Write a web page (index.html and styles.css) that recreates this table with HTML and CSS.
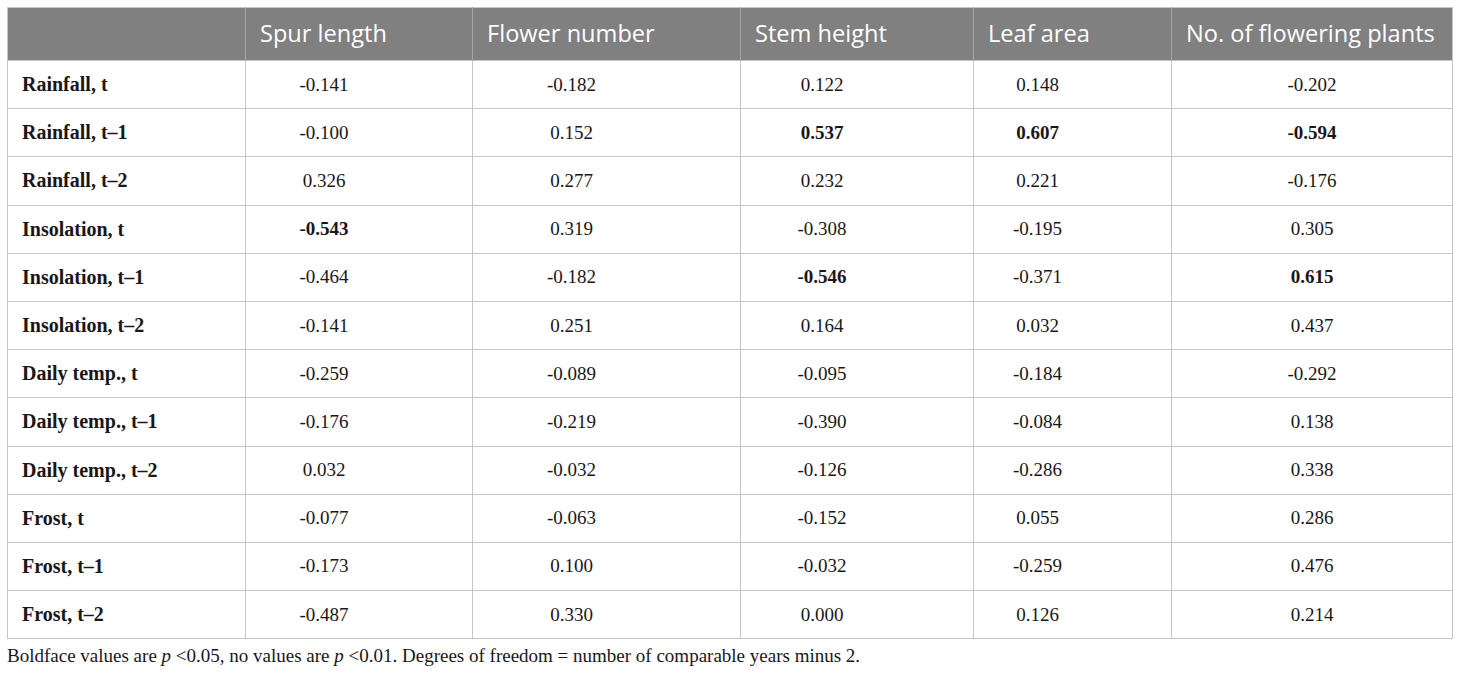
FILE: index.html
```html
<!DOCTYPE html>
<html lang="en">
  <head>
    <meta charset="UTF-8" />
    <meta name="viewport" content="width=device-width, initial-scale=1.0" />
    <title>Climate correlations</title>
    <link rel="stylesheet" href="styles.css">
  </head>
  <body>
    <div class="table-wrap">
      <table class="corr">
        <colgroup>
          <col class="c-label" />
          <col class="c-spur" />
          <col class="c-flower" />
          <col class="c-stem" />
          <col class="c-leaf" />
          <col class="c-plants" />
        </colgroup>
        <thead>
          <tr>
            <th></th>
            <th>Spur length</th>
            <th>Flower number</th>
            <th>Stem height</th>
            <th>Leaf area</th>
            <th>No. of flowering plants</th>
          </tr>
        </thead>
        <tbody>
          <tr>
            <td>Rainfall, t</td>
            <td>-0.141</td><td>-0.182</td><td>0.122</td><td>0.148</td><td>-0.202</td>
          </tr>
          <tr>
            <td>Rainfall, t–1</td>
            <td>-0.100</td><td>0.152</td><td class="sig">0.537</td><td class="sig">0.607</td><td class="sig">-0.594</td>
          </tr>
          <tr>
            <td>Rainfall, t–2</td>
            <td>0.326</td><td>0.277</td><td>0.232</td><td>0.221</td><td>-0.176</td>
          </tr>
          <tr>
            <td>Insolation, t</td>
            <td class="sig">-0.543</td><td>0.319</td><td>-0.308</td><td>-0.195</td><td>0.305</td>
          </tr>
          <tr>
            <td>Insolation, t–1</td>
            <td>-0.464</td><td>-0.182</td><td class="sig">-0.546</td><td>-0.371</td><td class="sig">0.615</td>
          </tr>
          <tr>
            <td>Insolation, t–2</td>
            <td>-0.141</td><td>0.251</td><td>0.164</td><td>0.032</td><td>0.437</td>
          </tr>
          <tr>
            <td>Daily temp., t</td>
            <td>-0.259</td><td>-0.089</td><td>-0.095</td><td>-0.184</td><td>-0.292</td>
          </tr>
          <tr>
            <td>Daily temp., t–1</td>
            <td>-0.176</td><td>-0.219</td><td>-0.390</td><td>-0.084</td><td>0.138</td>
          </tr>
          <tr>
            <td>Daily temp., t–2</td>
            <td>0.032</td><td>-0.032</td><td>-0.126</td><td>-0.286</td><td>0.338</td>
          </tr>
          <tr>
            <td>Frost, t</td>
            <td>-0.077</td><td>-0.063</td><td>-0.152</td><td>0.055</td><td>0.286</td>
          </tr>
          <tr>
            <td>Frost, t–1</td>
            <td>-0.173</td><td>0.100</td><td>-0.032</td><td>-0.259</td><td>0.476</td>
          </tr>
          <tr>
            <td>Frost, t–2</td>
            <td>-0.487</td><td>0.330</td><td>0.000</td><td>0.126</td><td>0.214</td>
          </tr>
        </tbody>
      </table>
      <p class="note">
        Boldface values are <i>p</i> &lt;0.05, no values are <i>p</i> &lt;0.01. Degrees of freedom = number of comparable years minus 2.
      </p>
    </div>
  </body>
</html>
```

FILE: styles.css
```css
* {
  box-sizing: border-box;
  margin: 0;
  padding: 0;
}
body {
  background: #ffffff;
  color: #1a1718;
  font-family: "Liberation Serif", "Times New Roman", serif;
}
.table-wrap {
  padding: 7px 8px 0 7px;
}
.corr {
  width: 1445px;
  table-layout: fixed;
  border-collapse: collapse;
  border: 1px solid #c6c6c6;
}
.c-label { width: 238px; }
.c-spur { width: 227px; }
.c-flower { width: 268px; }
.c-stem { width: 233px; }
.c-leaf { width: 198px; }
.c-plants { width: 281px; }
.corr th {
  background: #808080;
  color: #ffffff;
  font-family: "Open Sans", "Liberation Sans", sans-serif;
  font-weight: 400;
  font-size: 23.6px;
  text-align: left;
  height: 53px;
  padding: 0 14px 3px 14px;
  border-left: 1px solid #a6a6a6;
  white-space: nowrap;
}
.corr th:first-child {
  border-left: none;
}
.corr td {
  height: 48.2px;
  font-size: 19px;
  text-align: center;
  padding: 0 85px 0 15px;
  border: 1px solid #c6c6c6;
}
.corr td:first-child {
  text-align: left;
  font-weight: 700;
  font-size: 20px;
  padding: 0 10px 0 14px;
}
.corr td:last-child {
  padding-right: 15px;
}
.corr td.sig {
  font-weight: 700;
}
.note {
  font-size: 19px;
  margin-top: 5px;
  line-height: 24px;
}
```
